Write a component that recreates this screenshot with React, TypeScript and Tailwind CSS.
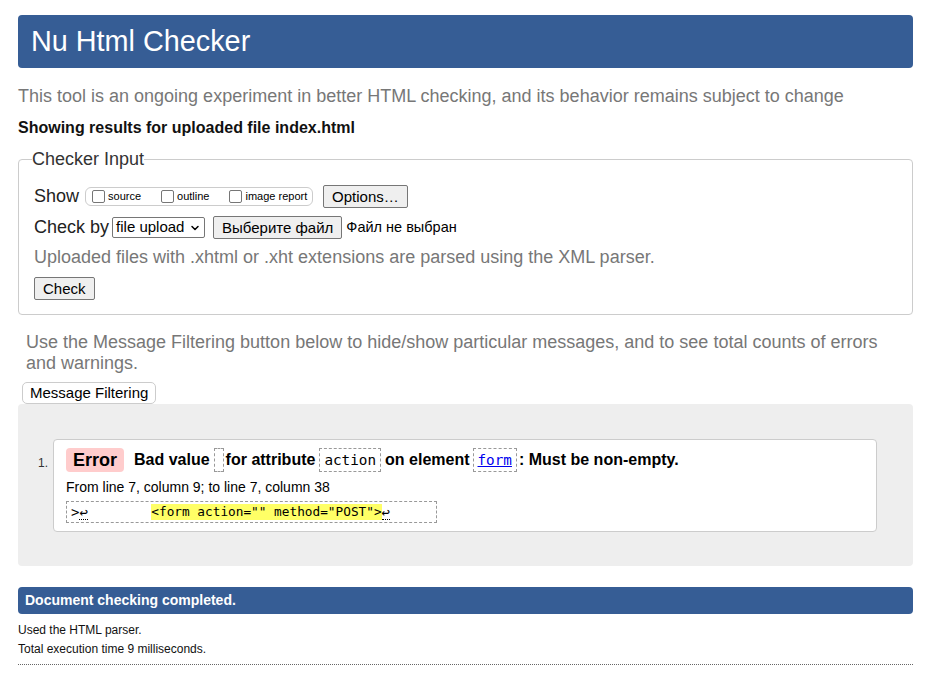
import { ChevronDown } from "lucide-react"

const sans = { fontFamily: '"Liberation Sans", Arial, sans-serif' }

function Checkbox({ label }: { label: string }) {
  return (
    <label className="flex items-center gap-[3px] text-[11px] text-black">
      <span className="w-[13px] h-[13px] border border-[#767676] rounded-[2px] bg-white" />
      {label}
    </label>
  )
}

function Btn({ children, className = "" }: { children: React.ReactNode; className?: string }) {
  return (
    <span
      className={
        "inline-flex items-center h-[23px] px-[8px] border border-[#767676] rounded-[2px] bg-[#efefef] text-[15px] text-black leading-none " +
        className
      }
    >
      {children}
    </span>
  )
}

function CodeBox({ children, link }: { children?: React.ReactNode; link?: boolean }) {
  return (
    <span
      className={
        "flex items-center h-[24px] px-[4px] border border-dashed border-[#999] font-['DejaVu_Sans_Mono',monospace] text-[14.3px] font-normal leading-none " +
        (link ? "text-[#00e] underline" : "text-black")
      }
    >
      {children}
    </span>
  )
}

export default function App() {
  return (
    <div className="bg-white min-h-[685px] pt-[15px]" style={sans}>
      <div className="ml-[18px] w-[895px] flex flex-col">
        {/* Header */}
        <div className="h-[53px] rounded-[4px] bg-[#365d95] flex items-center pl-[13px]">
          <h1 className="text-[28.8px] text-white leading-none">Nu Html Checker</h1>
        </div>

        <p className="mt-[18px] text-[18px] leading-[21px] text-[#777]">
          This tool is an ongoing experiment in better HTML checking, and its behavior remains subject to change
        </p>
        <p className="mt-[12px] text-[16px] leading-[18px] font-bold text-[#111]">
          Showing results for uploaded file index.html
        </p>

        {/* Checker input */}
        <fieldset className="mt-[12px] border border-[#ccc] rounded-[4px] px-[15px] pb-[14px]">
          <legend className="ml-[-2px] text-[18px] leading-[21px] text-[#333]">Checker Input</legend>

          <div className="mt-[14px] h-[25px] flex items-center">
            <span className="text-[18px] text-[#222]">Show</span>
            <div className="ml-[6px] h-[19px] w-[228px] border border-[#ccc] rounded-[6px] flex items-center pl-[6px] gap-[20px]">
              <Checkbox label="source" />
              <Checkbox label="outline" />
              <Checkbox label="image report" />
            </div>
            <Btn className="ml-[10px]">Options…</Btn>
          </div>

          <div className="mt-[6px] h-[25px] flex items-center">
            <span className="text-[18px] text-[#222]">Check by</span>
            <span className="ml-[3px] h-[21px] w-[93px] border border-[#767676] rounded-[2px] bg-white flex items-center justify-between pl-[3px] pr-[3px] text-[15px] text-black">
              file upload
              <ChevronDown className="w-[12px] h-[12px]" strokeWidth={3} />
            </span>
            <Btn className="ml-[8px] text-[14px]">Выберите файл</Btn>
            <span className="ml-[4px] text-[14.5px] text-black">Файл не выбран</span>
          </div>

          <p className="mt-[7px] text-[18px] leading-[21px] text-[#777]">
            Uploaded files with .xhtml or .xht extensions are parsed using the XML parser.
          </p>

          <div className="mt-[9px] flex">
            <Btn className="px-[6px]">Check</Btn>
          </div>
        </fieldset>

        {/* Filtering */}
        <p className="mt-[17px] ml-[8px] max-w-[870px] text-[18px] leading-[21px] text-[#777]">
          Use the Message Filtering button below to hide/show particular messages, and to see total counts of errors and warnings.
        </p>
        <div className="mt-[8px] ml-[4px] flex">
          <span className="inline-flex items-center h-[22px] px-[7px] border border-[#ccc] rounded-[5px] bg-white text-[15px] text-black">
            Message Filtering
          </span>
        </div>

        {/* Results */}
        <div className="bg-[#eee] rounded-[4px] pt-[35px] pb-[34px] pl-[20px] pr-[36px] flex">
          <span className="w-[15px] mt-[17px] text-[12px] leading-[14px] text-[#333]">1.</span>
          <div className="flex-1 bg-white border border-[#ccc] rounded-[4px] pt-[8px] pb-[8px] px-[12px]">
            <div className="h-[24px] flex items-center text-[16px] leading-none font-bold text-black">
              <span className="h-[24px] px-[7px] rounded-[4px] bg-[#fcc] flex items-center text-[18px]">Error</span>
              <span className="ml-[10px]">Bad value</span>
              <span className="ml-[4px]">
                <CodeBox />
              </span>
              <span className="ml-[2px]">for attribute</span>
              <span className="ml-[4px]">
                <CodeBox>action</CodeBox>
              </span>
              <span className="ml-[4px]">on element</span>
              <span className="ml-[3px]">
                <CodeBox link>form</CodeBox>
              </span>
              <span className="ml-[2px]">: Must be non-empty.</span>
            </div>
            <p className="mt-[7px] text-[14px] leading-[16px] text-black">
              From line 7, column 9; to line 7, column 38
            </p>
            <div className="mt-[6px] w-[371px] h-[22px] border border-dashed border-[#999] pl-[4px] flex items-center font-['DejaVu_Sans_Mono',monospace] text-[12.75px] leading-none text-black whitespace-pre">
              <span className="text-[14px]">&gt;</span>
              <span className="border-b border-dotted border-black text-[14px]">↩</span>
              <span className="ml-[2px]">{"        "}</span>
              <span className="bg-[#ff6] py-[2px]">{'<form action="" method="POST">'}</span>
              <span className="border-b border-dotted border-black text-[14px]">↩</span>
            </div>
          </div>
        </div>

        {/* Done */}
        <div className="mt-[21px] h-[27px] rounded-[4px] bg-[#365d95] flex items-center pl-[7px]">
          <span className="text-[14px] font-bold text-white">Document checking completed.</span>
        </div>
        <p className="mt-[9px] text-[12px] leading-[14px] text-[#111]">Used the HTML parser.</p>
        <p className="mt-[5px] text-[12px] leading-[14px] text-[#111]">Total execution time 9 milliseconds.</p>
        <div className="mt-[8px] border-t border-dotted border-[#666]" />
      </div>
    </div>
  )
}
